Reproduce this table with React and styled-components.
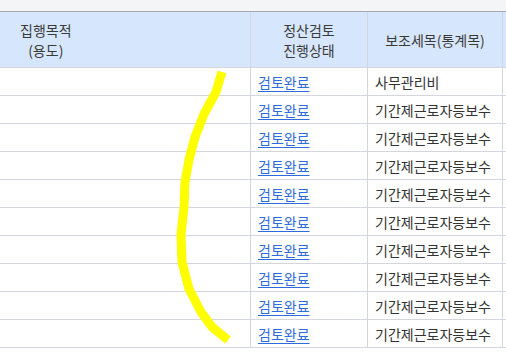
import React from 'react';
import styled, { createGlobalStyle } from 'styled-components';

const GlobalStyle = createGlobalStyle`
  html, body {
    margin: 0;
    padding: 0;
    background: #fff;
  }
  body {
    font-family: "Noto Sans CJK KR", "Noto Sans", sans-serif;
    color: #333;
  }
`;

const Page = styled.div`
  position: relative;
  width: 506px;
  height: 362px;
  overflow: hidden;
  background: #fff;
`;

const TopStrip = styled.div`
  height: 11px;
  background: #f4f5f7;
  border-bottom: 1px solid #a3a8b0;
`;

const Row = styled.div`
  display: grid;
  grid-template-columns: 251px 117px 135px 100px;
  height: ${(p) => p.$height}px;
  background: ${(p) => (p.$head ? '#d6e6fc' : '#fff')};
`;

const Cell = styled.div`
  box-sizing: border-box;
  display: flex;
  align-items: center;
  justify-content: ${(p) => p.$justify || 'flex-start'};
  padding-left: ${(p) => p.$pad || 0}px;
  border-right: 1px solid #d3d6dc;
  border-bottom: 1px solid #d3d6dc;
  font-size: 14px;
  line-height: 20px;
  white-space: nowrap;
`;

const HeadText = styled.span`
  display: inline-block;
  text-align: center;
  color: #3a3a3a;
`;

const StatusLink = styled.a`
  color: #2f6bdc;
  text-decoration: underline;
  text-underline-offset: 3px;
  cursor: pointer;
`;

const Highlight = styled.svg`
  position: absolute;
  left: 0;
  top: 0;
  pointer-events: none;
`;

const rows = [
  '사무관리비',
  '기간제근로자등보수',
  '기간제근로자등보수',
  '기간제근로자등보수',
  '기간제근로자등보수',
  '기간제근로자등보수',
  '기간제근로자등보수',
  '기간제근로자등보수',
  '기간제근로자등보수',
  '기간제근로자등보수',
];

export default function App() {
  return (
    <Page>
      <GlobalStyle />
      <TopStrip />
      <Row $head $height={56}>
        <Cell $pad={20}>
          <HeadText>
            집행목적
            <br />
            (용도)
          </HeadText>
        </Cell>
        <Cell $justify="center">
          <HeadText>
            정산검토
            <br />
            진행상태
          </HeadText>
        </Cell>
        <Cell $justify="center">
          <HeadText>보조세목(통계목)</HeadText>
        </Cell>
        <Cell />
      </Row>
      {rows.map((name, i) => (
        <Row key={i} $height={28}>
          <Cell />
          <Cell $pad={7}>
            <StatusLink>검토완료</StatusLink>
          </Cell>
          <Cell $pad={7}>{name}</Cell>
          <Cell />
        </Row>
      ))}
      <Highlight width="506" height="362" viewBox="0 0 506 362">
        <polyline
          points="222,72 216,92 204,114 195,137 189,160 185,182 184,207 181,235 182,262 189,289 201,312 212,327 228,340"
          fill="none"
          stroke="#ffff00"
          strokeWidth="9"
          strokeLinejoin="round"
        />
      </Highlight>
    </Page>
  );
}
